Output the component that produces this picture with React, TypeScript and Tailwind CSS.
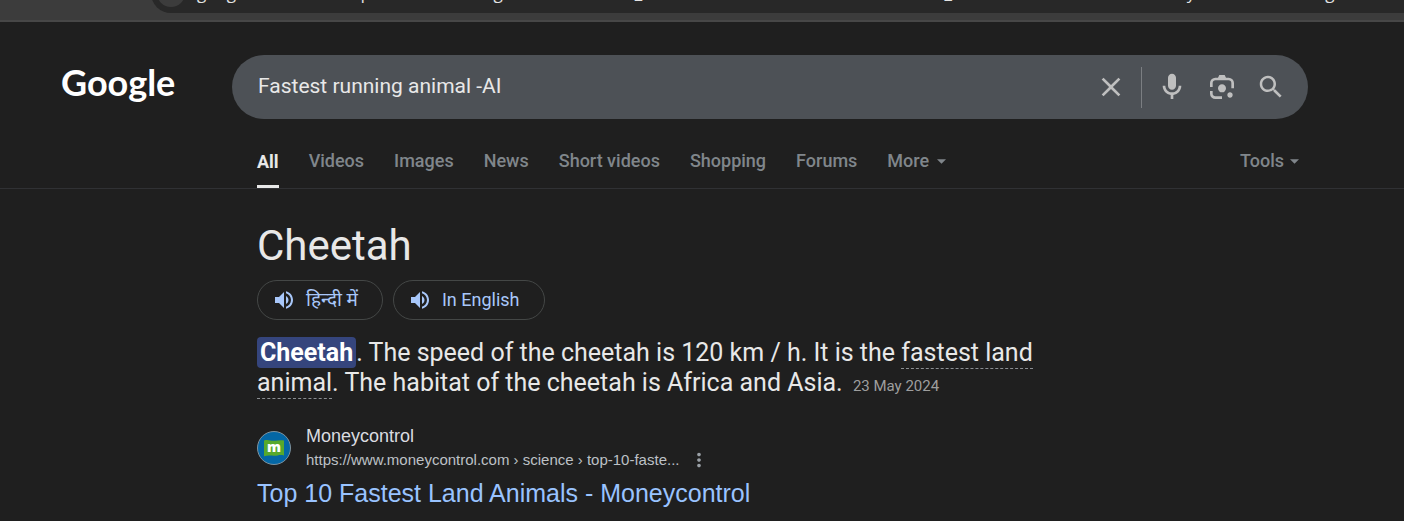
import type { ReactNode } from "react";

const tabs = ["Videos", "Images", "News", "Short videos", "Shopping", "Forums"];

const addressUrl =
  "google.com/search?q=Fastest+running+animal+-AI&sca_esv=4b86d2f5139c0a27&rlz=1C1VDKB_enIN1084IN10&source=history&ved=2ahUKEwig8";

function MaterialIcon({ path, className, viewBox = "0 0 24 24" }: { path: string; className: string; viewBox?: string }) {
  return (
    <svg viewBox={viewBox} className={className} fill="currentColor" aria-hidden="true">
      <path d={path} />
    </svg>
  );
}

function AddressBar() {
  return (
    <header className="flex h-[22px] items-end overflow-hidden border-b-2 border-[#474747] bg-[#3c3c3c] pl-[151px]">
      <div className="mb-[7px] flex h-[40px] min-w-0 flex-1 shrink-0 items-center rounded-l-full bg-[#282828] pl-[6px]">
        <span className="h-[28px] w-[28px] shrink-0 rounded-full bg-[#3c3c3c]" />
        <span className="ml-[12px] whitespace-nowrap font-['Open_Sans',sans-serif] text-[17px] leading-[24px] text-[#e3e3e3]">
          {addressUrl}
        </span>
      </div>
    </header>
  );
}

function SearchBox() {
  return (
    <form role="search" className="flex h-[64px] flex-1 items-center rounded-full bg-[#4d5156] pr-[22px] pl-[26px] text-[#bfbfbf]">
      <input
        type="text"
        aria-label="Search"
        defaultValue="Fastest running animal -AI"
        className="min-w-0 flex-1 bg-transparent font-[Roboto,sans-serif] text-[21px] text-[#e8e8e8] outline-none"
      />
      <button type="button" aria-label="Clear" className="mr-[14px]">
        <MaterialIcon
          className="h-8 w-8"
          path="M19 6.41L17.59 5 12 10.59 6.41 5 5 6.41 10.59 12 5 17.59 6.41 19 12 13.41 17.59 19 19 17.59 13.41 12z"
        />
      </button>
      <span className="h-[41px] w-px bg-[#7b7e82]" />
      <div className="ml-[14px] flex items-center gap-[18px]">
        <button type="button" aria-label="Search by voice">
          <MaterialIcon
            className="h-8 w-8"
            path="M12 14c1.66 0 3-1.34 3-3V5c0-1.66-1.34-3-3-3S9 3.34 9 5v6c0 1.66 1.34 3 3 3zm5-3c0 2.76-2.24 5-5 5s-5-2.24-5-5H5c0 3.53 2.61 6.43 6 6.92V21h2v-3.08c3.39-.49 6-3.39 6-6.92h-2z"
          />
        </button>
        <button type="button" aria-label="Search by image">
          <MaterialIcon
            className="h-8 w-8"
            viewBox="0 -960 960 960"
            path="M480-320q-50 0-85-35t-35-85q0-50 35-85t85-35q50 0 85 35t35 85q0 50-35 85t-85 35Zm240 160q-33 0-56.5-23.5T640-240q0-33 23.5-56.5T720-320q33 0 56.5 23.5T800-240q0 33-23.5 56.5T720-160Zm-440 40q-66 0-113-47t-47-113v-80h80v80q0 33 23.5 56.5T280-200h200v80H280Zm480-320v-160q0-33-23.5-56.5T680-680H280q-33 0-56.5 23.5T200-600v120h-80v-120q0-66 47-113t113-47h80l40-80h160l40 80h80q66 0 113 47t47 113v160h-80Z"
          />
        </button>
        <button type="submit" aria-label="Google Search">
          <MaterialIcon
            className="h-[30px] w-[30px]"
            path="M15.5 14h-.79l-.28-.27C15.41 12.59 16 11.11 16 9.5 16 5.91 13.09 3 9.5 3S3 5.91 3 9.5 5.91 16 9.5 16c1.61 0 3.09-.59 4.23-1.57l.27.28v.79l5 4.99L20.49 19l-4.99-5zm-6 0C7.01 14 5 11.99 5 9.5S7.01 5 9.5 5 14 7.01 14 9.5 11.99 14 9.5 14z"
          />
        </button>
      </div>
    </form>
  );
}

function Caret() {
  return (
    <svg viewBox="0 0 10 5" className="h-[5px] w-[9px]" fill="currentColor" aria-hidden="true">
      <path d="M0 0h10L5 5z" />
    </svg>
  );
}

function Tabs() {
  return (
    <nav className="border-b border-[#303134] pr-[105px] pl-[257px] font-[Roboto,sans-serif] text-lg font-medium text-[#80868b]">
      <div className="flex h-[54px] items-stretch gap-[30px]">
        <a href="#all" className="flex items-center border-b-[3px] border-[#e8e8e8] pt-1 font-bold text-[#e8e8e8]">
          All
        </a>
        {tabs.map((tab) => (
          <a key={tab} href={`#${tab}`} className="flex items-center whitespace-nowrap">
            {tab}
          </a>
        ))}
        <button type="button" className="flex items-center gap-2">
          More
          <Caret />
        </button>
        <button type="button" className="ml-auto flex items-center gap-[6px]">
          Tools
          <Caret />
        </button>
      </div>
    </nav>
  );
}

function ListenButton({ children }: { children: ReactNode }) {
  return (
    <button
      type="button"
      className="flex h-[40px] items-center gap-[10px] rounded-full border border-[#444746] pr-[24px] pl-[14px] font-[Roboto,'Noto_Sans_Devanagari',sans-serif] text-lg text-[#a8c7fa]"
    >
      <MaterialIcon
        className="h-6 w-6"
        path="M3 9v6h4l5 5V4L7 9H3zm13.5 3c0-1.77-1.02-3.29-2.5-4.03v8.05c1.48-.73 2.5-2.25 2.5-4.02zM14 3.23v2.06c2.89.86 5 3.54 5 6.71s-2.11 5.85-5 6.71v2.06c4.01-.91 7-4.49 7-8.77s-2.99-7.86-7-8.77z"
      />
      {children}
    </button>
  );
}

function Answer() {
  return (
    <section className="font-[Roboto,sans-serif] text-[#e8e8e8]">
      <h1 className="text-[42px] leading-[50px]">Cheetah</h1>
      <div className="mt-[9px] flex gap-[10px]">
        <ListenButton>
          <span lang="hi" className="text-[19px]">
            हिन्दी में
          </span>
        </ListenButton>
        <ListenButton>In English</ListenButton>
      </div>
      <p className="mt-[18px] text-[25px] leading-[30px]">
        <mark className="rounded bg-[#35457d] px-[3px] py-px font-bold text-white">Cheetah</mark>. The speed of the
        cheetah is 120 km / h. It is the{" "}
        <a href="#land" className="border-b border-dashed border-[#8a8d91] pb-px">
          fastest land
          <br />
          animal
        </a>
        . The habitat of the cheetah is Africa and Asia.{" "}
        <time dateTime="2024-05-23" className="ml-1 text-[15px] text-[#9e9e9e]">
          23 May 2024
        </time>
      </p>
    </section>
  );
}

function Favicon() {
  return (
    <svg viewBox="0 0 34 34" className="h-[34px] w-[34px]" aria-hidden="true">
      <circle cx="17" cy="17" r="16.5" fill="#0467a5" stroke="#7f929e" />
      <path d="M7 9.500c4-1.500 7 .8 11 .3 3-.5 6-1 9-.3v15c-4-1.200-7 .5-10 .3-4-.3-7-.6-10 .4z" fill="#57a92c" />
      <text x="17" y="21" textAnchor="middle" fill="#fff" fontFamily="Open Sans, sans-serif" fontWeight="800" fontSize="14">
        m
      </text>
    </svg>
  );
}

function Result() {
  return (
    <article className="mt-[23px] font-['Liberation_Sans',Arial,sans-serif]">
      <div className="flex items-center gap-[15px]">
        <Favicon />
        <div>
          <div className="text-[18px] leading-[24px] text-[#dadce0]">Moneycontrol</div>
          <div className="flex items-center gap-[9px] text-[15px] leading-[24px] text-[#bdc1c6]">
            <cite className="not-italic">https://www.moneycontrol.com › science › top-10-faste...</cite>
            <button type="button" aria-label="About this result" className="text-[#9aa0a6]">
              <MaterialIcon
                className="h-[22px] w-[22px]"
                path="M12 8c1.1 0 2-.9 2-2s-.9-2-2-2-2 .9-2 2 .9 2 2 2zm0 2c-1.1 0-2 .9-2 2s.9 2 2 2 2-.9 2-2-.9-2-2-2zm0 6c-1.1 0-2 .9-2 2s.9 2 2 2 2-.9 2-2-.9-2-2-2z"
              />
            </button>
          </div>
        </div>
      </div>
      <h3 className="mt-[5px] text-[25px] leading-[32px] text-[#99c3ff]">
        <a href="https://www.moneycontrol.com">Top 10 Fastest Land Animals - Moneycontrol</a>
      </h3>
    </article>
  );
}

export default function App() {
  return (
    <div className="min-h-screen bg-[#1f1f1f]">
      <AddressBar />
      <div className="flex items-center pt-[33px] pr-[96px]">
        <a
          href="#home"
          className="w-[232px] shrink-0 pb-[10px] pl-[61px] font-[Lato,sans-serif] text-[36px] leading-none font-bold text-white"
        >
          Google
        </a>
        <SearchBox />
      </div>
      <div className="pt-[15px]">
        <Tabs />
      </div>
      <main className="pt-[32px] pl-[257px]">
        <Answer />
        <Result />
      </main>
    </div>
  );
}
